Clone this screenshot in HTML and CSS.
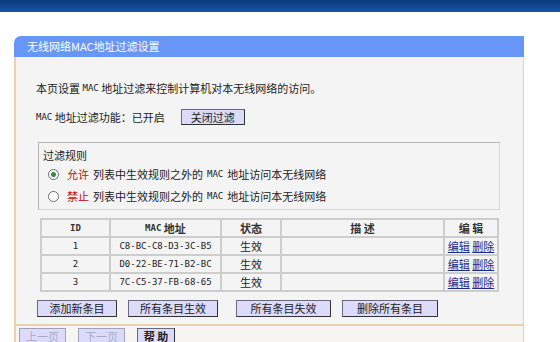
FILE: index.html
```html
<!DOCTYPE html>
<html>
<head>
  <meta charset="utf-8">
  <link rel="stylesheet" href="styles.css">
</head>
<body>
  <div class="topbar"></div>

  <div class="panel">
    <div class="panel-head">无线网络MAC地址过滤设置</div>
    <div class="panel-body">
      <p class="intro">本页设置 <span class="mono">MAC</span> 地址过滤来控制计算机对本无线网络的访问。</p>

      <div class="status-row">
        <span><span class="mono">MAC</span> 地址过滤功能：已开启</span>
        <button class="btn btn-toggle">关闭过滤</button>
      </div>

      <div class="rules">
        <div class="rules-title">过滤规则</div>
        <label class="rule">
          <span class="radio checked"></span>
          <span class="red">允许</span> 列表中生效规则之外的 <span class="mono">MAC</span> 地址访问本无线网络
        </label>
        <label class="rule">
          <span class="radio"></span>
          <span class="red">禁止</span> 列表中生效规则之外的 <span class="mono">MAC</span> 地址访问本无线网络
        </label>
      </div>

      <table class="mac-table">
        <tr>
          <th class="col-id mono">ID</th>
          <th class="col-mac"><span class="mono">MAC</span> 地址</th>
          <th class="col-state">状态</th>
          <th class="col-desc">描 述</th>
          <th class="col-edit">编 辑</th>
        </tr>
        <tr>
          <td class="mono">1</td>
          <td class="mono">C8-BC-C8-D3-3C-B5</td>
          <td>生效</td>
          <td></td>
          <td><a href="#">编辑</a> <a href="#">删除</a></td>
        </tr>
        <tr>
          <td class="mono">2</td>
          <td class="mono">D0-22-BE-71-B2-BC</td>
          <td>生效</td>
          <td></td>
          <td><a href="#">编辑</a> <a href="#">删除</a></td>
        </tr>
        <tr>
          <td class="mono">3</td>
          <td class="mono">7C-C5-37-FB-68-65</td>
          <td>生效</td>
          <td></td>
          <td><a href="#">编辑</a> <a href="#">删除</a></td>
        </tr>
      </table>

      <div class="actions">
        <button class="btn w-add">添加新条目</button>
        <button class="btn w-on">所有条目生效</button>
        <button class="btn w-off">所有条目失效</button>
        <button class="btn w-del">删除所有条目</button>
      </div>

      <div class="footer">
        <button class="btn w-page" disabled>上一页</button>
        <button class="btn w-page" disabled>下一页</button>
        <button class="btn w-help">帮 助</button>
      </div>
    </div>
  </div>
</body>
</html>
```

FILE: styles.css
```css
body {
  margin: 0;
  background: #fff;
  font-family: "Noto Sans CJK SC", "Liberation Sans", sans-serif;
  font-size: 11px;
  color: #222;
  overflow: hidden;
}
.topbar {
  height: 12px;
  background: linear-gradient(#08397e, #1a55a2);
}
.panel {
  margin: 24px 0 0 14px;
  width: 510px;
}
.panel-head {
  height: 21px;
  line-height: 21px;
  padding-left: 13px;
  background: #6896f6;
  color: #fff;
  border-radius: 7px 0 0 0;
}
.panel-body {
  background: #f4f4f4;
  border-left: 2px solid #ead2ae;
  border-right: 1px solid #ead2ae;
  height: 300px;
}
.mono {
  font-family: "DejaVu Sans Mono", monospace;
  font-size: 9px;
  vertical-align: top;
}
.intro {
  margin: 0;
  padding: 24px 0 0 20px;
  height: 14px;
  line-height: 14px;
}
.status-row {
  display: flex;
  align-items: center;
  gap: 16px;
  margin: 14px 0 0 20px;
  height: 16px;
  line-height: 16px;
}
.btn {
  font-family: "Noto Sans CJK SC", sans-serif;
  font-size: 11px;
  color: #222;
  background: #dcdcfa;
  border: 1px solid #6a6a7a;
  border-right-color: #333;
  border-bottom-color: #333;
  height: 17px;
  padding: 0;
  line-height: 15px;
}
.btn:disabled {
  color: #a8aac8;
  border-color: #a0a0b8;
}
.btn-toggle {
  width: 64px;
  height: 16px;
}
.rules {
  margin: 17px 0 0 22px;
  width: 460px;
  height: 66px;
  border: 1px solid #b4b4b4;
  border-right-color: #d8d8d8;
  border-bottom-color: #d8d8d8;
}
.rules-title {
  padding: 5px 0 0 4px;
  height: 14px;
  line-height: 14px;
}
.rule {
  display: flex;
  align-items: center;
  height: 22px;
  line-height: 22px;
  padding-left: 9px;
}
.rule:first-of-type {
  margin-top: 1px;
}
.radio {
  width: 9px;
  height: 9px;
  border: 1px solid #6c6c6c;
  border-radius: 50%;
  background: #fff;
  margin-right: 8px;
  display: flex;
  align-items: center;
  justify-content: center;
}
.radio.checked::after {
  content: "";
  width: 5px;
  height: 5px;
  border-radius: 50%;
  background: #2f8f3a;
}
.red {
  color: #c40c0c;
  margin-right: 4px;
}
.rule .mono {
  margin: 0 4px;
}
.mac-table {
  margin: 8px 0 0 24px;
  width: 459px;
  border-collapse: collapse;
  border: 2px solid #c8c8c8;
}
.mac-table th,
.mac-table td {
  height: 16px;
  padding: 0;
  border: 2px solid #cdcdcd;
  text-align: center;
  font-weight: normal;
  line-height: 16px;
  vertical-align: middle;
}
.mac-table td.mono,
.mac-table th.mono {
  font-size: 9px;
  line-height: 16px;
}
.mac-table th {
  font-weight: bold;
  color: #333;
}
.col-id { width: 67px; }
.col-mac { width: 109px; }
.col-state { width: 58px; }
.col-desc { width: 161px; }
.mac-table a {
  color: #1a2a8e;
}
.actions {
  display: flex;
  gap: 11px;
  margin: 8px 0 0 21px;
}
.w-add { width: 80px; }
.w-on { width: 90px; }
.w-off { width: 95px; margin-left: 7px; }
.w-del { width: 96px; }
.footer {
  display: flex;
  gap: 12px;
  margin-top: 7px;
  border-top: 2px solid #ead2ae;
  background: #f6f5f1;
  padding: 2px 0 0 3px;
  height: 40px;
}
.w-page { width: 47px; }
.w-help { width: 38px; font-weight: bold; }
```
